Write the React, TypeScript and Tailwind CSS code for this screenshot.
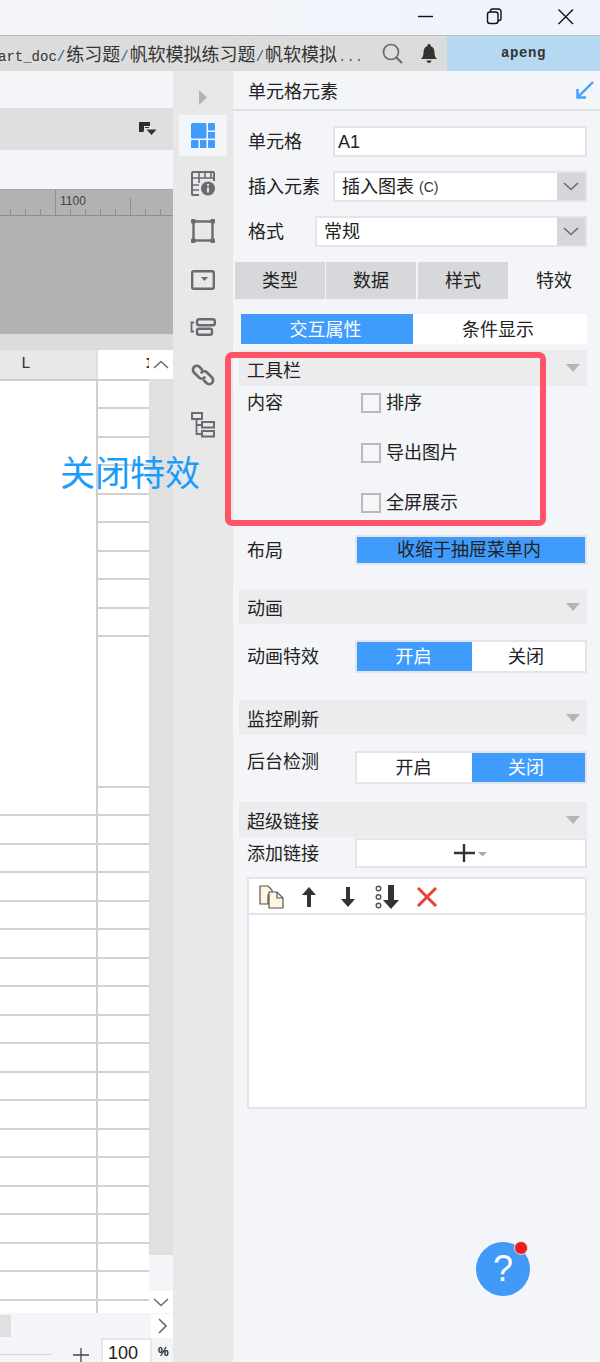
import { FC, ReactNode } from 'react'

const rowsTop = Array.from({ length: 9 })
const rowsBottom = Array.from({ length: 19 })

const Caret: FC = () => (
  <svg width="14" height="8" viewBox="0 0 14 8" className="mr-[7px]">
    <path d="M0 0h14L7 8z" fill="#b4b5b8" />
  </svg>
)

const Chevron: FC = () => (
  <svg width="16" height="9" viewBox="0 0 16 9" fill="none">
    <path d="M1 1l7 6.500L15 1" stroke="#6b6c70" strokeWidth="1.600" />
  </svg>
)

const Section: FC<{ title: string; className: string }> = ({ title, className }) => (
  <div className={`ml-[6px] w-[348px] flex items-center justify-between pl-[8px] bg-[#ececee] ${className}`}>
    <span className="pt-[6px] text-[18px] text-[#222]">{title}</span>
    <Caret />
  </div>
)

const Field: FC<{ label: string; className: string; children: ReactNode }> = ({ label, className, children }) => (
  <div className={`flex items-center justify-between pr-[13px] ${className}`}>
    <span className="pt-[2px] text-[18px] text-[#222]">{label}</span>
    {children}
  </div>
)

const SelectBox: FC<{ value: ReactNode; className: string }> = ({ value, className }) => (
  <div className={`h-full flex border-2 border-[#e3e4e7] bg-white ${className}`}>
    <div className="flex-1 flex items-center pt-[2px] text-[18px] text-[#222]">{value}</div>
    <div className="w-[28px] bg-[#d5d6d9] flex items-center justify-center">
      <Chevron />
    </div>
  </div>
)

const Toggle: FC<{ on: boolean }> = ({ on }) => (
  <div className="w-[232px] h-full flex border-2 border-[#e3e4e7] text-[18px]">
    <div className={`w-[115px] flex items-center justify-center pt-[2px] pr-[2px] ${on ? 'bg-[#409cfc] text-white' : 'bg-white text-[#222]'}`}>开启</div>
    <div className={`flex-1 flex items-center justify-center pt-[2px] pr-[5px] ${on ? 'bg-white text-[#222]' : 'bg-[#409cfc] text-white'}`}>关闭</div>
  </div>
)

const Check: FC<{ label: string }> = ({ label }) => (
  <div className="h-[20px] flex items-center gap-[5px]">
    <div className="w-[20px] h-[20px] border-2 border-[#b9b9bb] bg-[#f6f6f8]" />
    <span className="text-[18px] text-[#222]">{label}</span>
  </div>
)

const SideIcon: FC<{ className: string; children: ReactNode }> = ({ className, children }) => (
  <div className={`flex justify-center ${className}`}>{children}</div>
)

export default function App() {
  return (
    <div className="relative w-[600px] h-[1362px] overflow-hidden flex flex-col bg-[#f4f5f8] font-['Liberation_Sans','Noto_Sans_CJK_SC',sans-serif]">
      {/* title bar */}
      <div className="h-[36px] shrink-0 flex items-center justify-end border-b border-[#bdbdbd] bg-gradient-to-r from-[#f4f5f9] to-[#eff3fb]">
        <svg width="600" height="35" viewBox="0 0 600 35" fill="none" stroke="#111" strokeWidth="1.400">
          <path d="M418 16.500h15" />
          <rect x="487.500" y="12" width="10.500" height="11.500" rx="2.500" />
          <path d="M490.500 12v-1a2 2 0 012-2h6a2.500 2.500 0 012.500 2.500v7a2 2 0 01-2 2H498" />
          <path d="M558.500 9.500l14.500 14.500M573 9.500L558.500 24" />
        </svg>
      </div>

      {/* address bar */}
      <div className="h-[35px] shrink-0 flex bg-[#dcdcdc]">
        <div className="w-[447px] relative overflow-hidden flex items-center whitespace-nowrap text-[#333] font-['Liberation_Mono','Noto_Sans_CJK_SC',monospace] text-[14px]">
          <div className="flex items-baseline -ml-[2px]">
            <span>art_doc</span>
            <span className="text-[#2d5f9a]">/</span>
            <span className="text-[18px] font-['Noto_Sans_CJK_SC',sans-serif] ml-[1px]">练习题</span>
            <span className="text-[#2d5f9a]">/</span>
            <span className="text-[18px] font-['Noto_Sans_CJK_SC',sans-serif] ml-[1px]">帆软模拟练习题</span>
            <span className="text-[#2d5f9a]">/</span>
            <span className="text-[18px] font-['Noto_Sans_CJK_SC',sans-serif] ml-[1px]">帆软模拟</span>
            <span className="text-[#7b4a8c] ml-[1px]">...</span>
          </div>
          <svg width="22" height="22" viewBox="0 0 22 22" fill="none" className="absolute left-[382px] top-[7px]">
            <circle cx="9" cy="9" r="7.500" stroke="#6b6b6b" strokeWidth="1.700" />
            <path d="M14.500 14.500l5.500 5.500" stroke="#6b6b6b" strokeWidth="2.200" />
          </svg>
          <svg width="18" height="20" viewBox="0 0 18 20" className="absolute left-[420px] top-[8px]">
            <path d="M9 0a1.500 1.500 0 011.500 2C13.500 3 14.500 5.500 14.500 9c0 3 1 4.500 2.500 6H1c1.500-1.500 2.500-3 2.500-6 0-3.500 1-6 4-7A1.500 1.500 0 019 0z" fill="#333" />
            <path d="M6.500 16.500h5a2.500 2.500 0 01-5 0z" fill="#333" />
          </svg>
        </div>
        <div className="flex-1 bg-[#b5d9f1] flex items-center justify-center font-['Liberation_Mono',monospace] text-[14px] font-bold text-[#333] tracking-[0.6px]">
          apeng
        </div>
      </div>

      <div className="flex-1 flex min-h-0">
        {/* left canvas */}
        <div className="w-[173px] shrink-0 flex flex-col">
          <div className="h-[37px] bg-[#f4f5f8]" />
          <div className="h-[42px] bg-[#dedfe0] flex items-center justify-end pr-[16px]">
            <svg width="18" height="14" viewBox="0 0 18 14">
              <path d="M0 0h11v4H5v3.500L4.500 10H0z" fill="#2e2e2e" />
              <path d="M6 5h4v1H6zM7.500 7.500h10L12.500 13z" fill="#333" />
              <path d="M0 0h11v3H0z" fill="#2e2e2e" />
            </svg>
          </div>
          <div className="h-[39px] bg-[#f4f5f8]" />
          <div className="h-[146px] bg-[#b2b2b2] border-t border-t-[#a9a9a9] border-b border-b-[#d8d8d8]">
            <svg width="173" height="30" viewBox="0 0 173 30" fill="none" stroke="#8f8f8f">
              <path d="M0 25.500h173M10.500 25v-6M25.500 25v-6M40.500 25v-6M55.500 25V0M70.500 25v-6M85.500 25v-6M100.500 25v-6M115.500 25v-6M130.500 25V8M145.500 25v-6M160.500 25v-6" />
              <text x="60" y="15" fill="#444" stroke="none" fontSize="12" fontFamily="Liberation Sans">1100</text>
            </svg>
          </div>
          <div className="h-[15px] bg-[#dcdcdc]" />

          <div className="flex-1 flex min-h-0">
            <div className="w-[149px] shrink-0 flex flex-col bg-white overflow-hidden">
              <div className="h-[30.500px] shrink-0 flex border-b-2 border-[#cfcfcf]">
                <div className="w-[98px] bg-[#e8e8e8] border-r-2 border-[#e0e0e0] flex items-center pl-[21px] font-['Liberation_Mono',monospace] text-[16px] text-[#333]">
                  L
                </div>
                <div className="flex-1 bg-white flex items-center justify-end overflow-hidden font-['Liberation_Mono',monospace] text-[14px] font-bold text-[#333]">
                  <span className="-mr-[5px]">I</span>
                </div>
              </div>
              <div className="h-[407px] shrink-0 flex">
                <div className="w-[98px] border-r-2 border-[#cfcfcf] bg-white" />
                <div className="flex-1 flex flex-col">
                  {rowsTop.map((_, i) => (
                    <div key={i} className="h-[28.500px] shrink-0 border-b-2 border-[#d2d2d2]" />
                  ))}
                  <div className="flex-1 border-b-2 border-[#d2d2d2]" />
                </div>
              </div>
              {rowsBottom.map((_, i) => (
                <div key={i} className="h-[28.500px] shrink-0 flex border-b-2 border-[#d2d2d2]">
                  <div className="w-[98px] border-r-2 border-[#cfcfcf]" />
                </div>
              ))}
              <div className="flex-1 flex">
                <div className="w-[98px] border-r-2 border-[#cfcfcf]" />
              </div>
            </div>
            <div className="flex-1 flex flex-col">
              <div className="h-[29px] bg-white flex items-center justify-center">
                <svg width="16" height="9" viewBox="0 0 16 9" fill="none">
                  <path d="M1 8l7-6.500L15 8" stroke="#6b6c70" strokeWidth="1.600" />
                </svg>
              </div>
              <div className="h-[876px] bg-[#e0e0e0]" />
              <div className="h-[36px]" />
              <div className="h-[22px] bg-white flex items-center justify-center">
                <Chevron />
              </div>
            </div>
          </div>

          <div className="h-[25px] shrink-0 flex items-center justify-between">
            <div className="w-[11px] h-[22px] bg-[#e0e0e0]" />
            <div className="w-[22px] h-[24px] bg-white flex items-center justify-center">
              <svg width="9" height="16" viewBox="0 0 9 16" fill="none">
                <path d="M1 1l7 7-7 7" stroke="#6b6c70" strokeWidth="1.600" />
              </svg>
            </div>
          </div>
          <div className="h-[24px] shrink-0 flex items-start relative">
            <div className="w-[52px] h-[1px] bg-[#d8d8d8] mt-[16px]" />
            <svg width="16" height="16" viewBox="0 0 16 16" fill="none" className="ml-[21px] mt-[9px]">
              <path d="M8 1v14M0 8h16" stroke="#444" strokeWidth="1.300" />
            </svg>
            <div className="ml-[12px] w-[51px] h-[24px] bg-white border-t-2 border-x-2 border-[#e6e7ea] pl-[5px] text-[18px] leading-[26px] text-[#222]">
              100
            </div>
            <span className="ml-[6px] mt-[5px] text-[12px] font-bold text-[#222]">%</span>
          </div>
        </div>

        {/* icon rail */}
        <div className="w-[60px] shrink-0 flex flex-col items-center bg-[#e8e8e8]">
          <svg width="10" height="15" viewBox="0 0 10 15" className="mt-[19px]">
            <path d="M1 0l8 7.500L1 15z" fill="#b3b3b4" />
          </svg>
          <div className="mt-[10px] w-[48px] h-[41px] bg-[#f4f5f8] flex items-center justify-center">
            <svg width="24" height="25" viewBox="0 0 24 25" fill="#409cfc">
              <rect width="15.500" height="15.500" rx="1.500" />
              <rect x="17" width="7" height="7.500" rx="1" />
              <rect x="17" y="9" width="7" height="6.500" />
              <rect y="17" width="7.500" height="8" rx="1" />
              <rect x="9" y="17" width="6.500" height="8" />
              <rect x="17" y="17" width="7" height="8" rx="1" />
            </svg>
          </div>
          <SideIcon className="mt-[15px]">
            <svg width="24" height="25" viewBox="0 0 24 25" fill="none" stroke="#6a6b70" strokeWidth="2">
              <path d="M8 24H2a1 1 0 01-1-1V2a1 1 0 011-1h20a1 1 0 011 1v8" />
              <path d="M1 7h22M8 2v10M14 2v5M20 2v5M2 14h6M2 19h6" strokeWidth="1.600" />
              <circle cx="17" cy="17.500" r="7" fill="#6a6b70" stroke="none" />
              <path d="M17 16.500v5M17 13v1.800" stroke="#e8e8e8" strokeWidth="2" />
            </svg>
          </SideIcon>
          <SideIcon className="mt-[23px]">
            <svg width="24" height="24" viewBox="0 0 24 24" fill="none" stroke="#6a6b70">
              <rect x="2.500" y="2.500" width="19" height="19" strokeWidth="2.400" />
              <rect x="0" y="0" width="4.500" height="4.500" fill="#6a6b70" stroke="none" rx="1" />
              <rect x="19.500" y="0" width="4.500" height="4.500" fill="#6a6b70" stroke="none" rx="1" />
              <rect x="0" y="19.500" width="4.500" height="4.500" fill="#6a6b70" stroke="none" rx="1" />
              <rect x="19.500" y="19.500" width="4.500" height="4.500" fill="#6a6b70" stroke="none" rx="1" />
            </svg>
          </SideIcon>
          <SideIcon className="mt-[27px]">
            <svg width="24" height="20" viewBox="0 0 24 20" fill="none">
              <rect x="1.200" y="1.200" width="21.600" height="17.600" rx="1.500" stroke="#6a6b70" strokeWidth="2.400" />
              <path d="M10 7h7l-3.500 4z" fill="#6a6b70" />
            </svg>
          </SideIcon>
          <SideIcon className="mt-[28px]">
            <svg width="26" height="18" viewBox="0 0 26 18" fill="none" stroke="#6a6b70">
              <path d="M4 4.500H1.500v9H4" strokeWidth="1.800" />
              <rect x="7" y="1.200" width="17.800" height="6" rx="2" strokeWidth="2.400" />
              <rect x="7" y="10.800" width="15" height="6" rx="2" strokeWidth="2.400" />
            </svg>
          </SideIcon>
          <SideIcon className="mt-[27px]">
            <svg width="24" height="24" viewBox="0 0 24 24" fill="none" stroke="#6a6b70" strokeWidth="2.600">
              <path d="M11 6.500L8.500 4a4 4 0 00-5.500 0 4 4 0 000 5.500l5 5a4 4 0 005.500 0" strokeLinecap="round" />
              <path d="M13 17.500l2.500 2.500a4 4 0 005.500 0 4 4 0 000-5.500l-5-5a4 4 0 00-5.500 0" strokeLinecap="round" />
            </svg>
          </SideIcon>
          <SideIcon className="mt-[25px]">
            <svg width="24" height="26" viewBox="0 0 24 26" fill="none" stroke="#6a6b70">
              <rect x="1" y="1" width="10" height="6" strokeWidth="2" />
              <path d="M5.500 7v15h5M5.500 13h5" strokeWidth="1.800" />
              <rect x="11" y="10" width="12" height="5.500" strokeWidth="2" />
              <rect x="11" y="19" width="12" height="5.500" strokeWidth="2" />
            </svg>
          </SideIcon>
        </div>

        {/* property panel */}
        <div className="flex-1 flex flex-col bg-[#f4f5f8]">
          <div className="h-[40px] shrink-0 flex items-center justify-between pl-[15px] pr-[6px] border-b-2 border-[#dfe0e2]">
            <span className="pt-[4px] text-[18px] text-[#222]">单元格元素</span>
            <svg width="18" height="18" viewBox="0 0 18 18" fill="none" stroke="#42a0ff" strokeWidth="2.400">
              <path d="M17 1L3 15" />
              <path d="M1.500 8v8.500H10" />
            </svg>
          </div>

          <Field label="单元格" className="mt-[15px] h-[31px] pl-[15px]">
            <div className="w-[254px] h-full border-2 border-[#e3e4e7] bg-white flex items-center pl-[3px] pt-[2px] text-[18px] text-[#222]">A1</div>
          </Field>
          <Field label="插入元素" className="mt-[14px] h-[31px] pl-[15px]">
            <SelectBox className="w-[254px] pl-[7px]" value={<>插入图表&nbsp;<span className="text-[14px] text-[#333]">(C)</span></>} />
          </Field>
          <Field label="格式" className="mt-[14px] h-[31px] pl-[15px]">
            <SelectBox className="w-[272px] pl-[7px]" value="常规" />
          </Field>

          <div className="mt-[15px] ml-[2px] h-[37px] flex text-[18px] text-[#222]">
            <div className="w-[90px] mr-[1px] pt-[2px] bg-[#d7d8dc] flex items-center justify-center">类型</div>
            <div className="w-[90px] mr-[2px] pt-[2px] bg-[#d7d8dc] flex items-center justify-center">数据</div>
            <div className="w-[90px] pt-[2px] bg-[#d7d8dc] flex items-center justify-center">样式</div>
            <div className="w-[92px] pt-[2px] flex items-center justify-center">特效</div>
          </div>

          <div className="mt-[15px] ml-[8px] w-[346px] h-[30px] flex text-[18px]">
            <div className="w-[172px] pt-[2px] pr-[3px] bg-[#409cfc] text-white flex items-center justify-center">交互属性</div>
            <div className="flex-1 pt-[2px] pr-[4px] bg-white text-[#222] flex items-center justify-center">条件显示</div>
          </div>

          <Section title="工具栏" className="mt-[6px] h-[36px]" />
          <div className="mt-[7px] ml-[14px] flex">
            <span className="w-[114px] h-[20px] flex items-center text-[18px] text-[#222]">内容</span>
            <div className="flex flex-col gap-[30px]">
              <Check label="排序" />
              <Check label="导出图片" />
              <Check label="全屏展示" />
            </div>
          </div>

          <Field label="布局" className="mt-[22px] h-[30px] pl-[14px]">
            <div className="w-[232px] h-full border-2 border-[#e3e4e7] bg-[#409cfc] flex items-center justify-center pr-[4px] text-[18px] text-[#222]">收缩于抽屉菜单内</div>
          </Field>

          <Section title="动画" className="mt-[24px] h-[35px]" />
          <Field label="动画特效" className="mt-[16px] h-[33px] pl-[14px]">
            <Toggle on />
          </Field>

          <Section title="监控刷新" className="mt-[27px] h-[35px]" />
          <div className="mt-[16px] h-[33px] flex justify-between pl-[14px] pr-[13px]">
            <span className="text-[18px] text-[#222] leading-[22px]">后台检测</span>
            <Toggle on={false} />
          </div>

          <Section title="超级链接" className="mt-[18px] h-[35px]" />
          <Field label="添加链接" className="mt-[1px] h-[30px] pl-[14px]">
            <div className="w-[232px] h-full border-2 border-[#e3e4e7] bg-white flex items-center justify-center pr-[2px]">
              <svg width="33" height="18" viewBox="0 0 33 18">
                <path d="M10 0v18M0 9h21" stroke="#333" strokeWidth="2.400" fill="none" />
                <path d="M24 8h9l-4.500 4.500z" fill="#a9a9ab" />
              </svg>
            </div>
          </Field>

          <div className="mt-[9px] ml-[14px] w-[340px] h-[232px] border-2 border-[#e3e4e7] bg-white">
            <div className="h-[36px] pt-[1px] border-b-2 border-[#e3e4e7] flex items-center pl-[10px]">
              <svg width="26" height="24" viewBox="0 0 26 24" fill="none" stroke="#555" strokeWidth="1.200">
                <path d="M1 1h8l4 4v5H9v9H1z" fill="#fff6e0" />
                <path d="M10 7h8l6 6v10H10z" fill="#fff6e0" />
                <path d="M18 7v6h6" />
              </svg>
              <svg width="14" height="20" viewBox="0 0 14 20" className="ml-[17px]">
                <path d="M7 0l7 8H9v12H5V8H0z" fill="#333" />
              </svg>
              <svg width="14" height="20" viewBox="0 0 14 20" className="ml-[25px]">
                <path d="M7 20l7-8H9V0H5v12H0z" fill="#333" />
              </svg>
              <svg width="24" height="24" viewBox="0 0 24 24" className="ml-[20px]">
                <g fill="none" stroke="#555" strokeWidth="1.400">
                  <circle cx="3.500" cy="3.500" r="2.300" />
                  <circle cx="3.500" cy="12" r="2.300" />
                  <circle cx="3.500" cy="20.500" r="2.300" />
                </g>
                <path d="M16 24l8-9h-5V0h-6v15H8z" fill="#333" />
              </svg>
              <svg width="22" height="20" viewBox="0 0 22 20" className="ml-[17px]">
                <path d="M2 1l18 18M20 1L2 19" stroke="#ea4335" strokeWidth="3" fill="none" />
              </svg>
            </div>
          </div>
        </div>
      </div>

      {/* annotation overlays */}
      <div className="absolute left-[60px] top-[448px] text-[35px] leading-[52px] text-[#1a9cf9] whitespace-nowrap">关闭特效</div>
      <div className="absolute left-[225px] top-[352px] w-[321px] h-[174px] border-[6px] border-[#ff5468] rounded-[7px]" />
      <div className="absolute left-[476px] top-[1242px] w-[54px] h-[54px] rounded-full bg-[#4199f8] flex items-center justify-center text-white text-[36px]">
        ?
      </div>
      <div className="absolute left-[514px] top-[1241px] w-[14px] h-[14px] rounded-full bg-[#ea1c24] border border-[#f6d6d8]" />
    </div>
  )
}
